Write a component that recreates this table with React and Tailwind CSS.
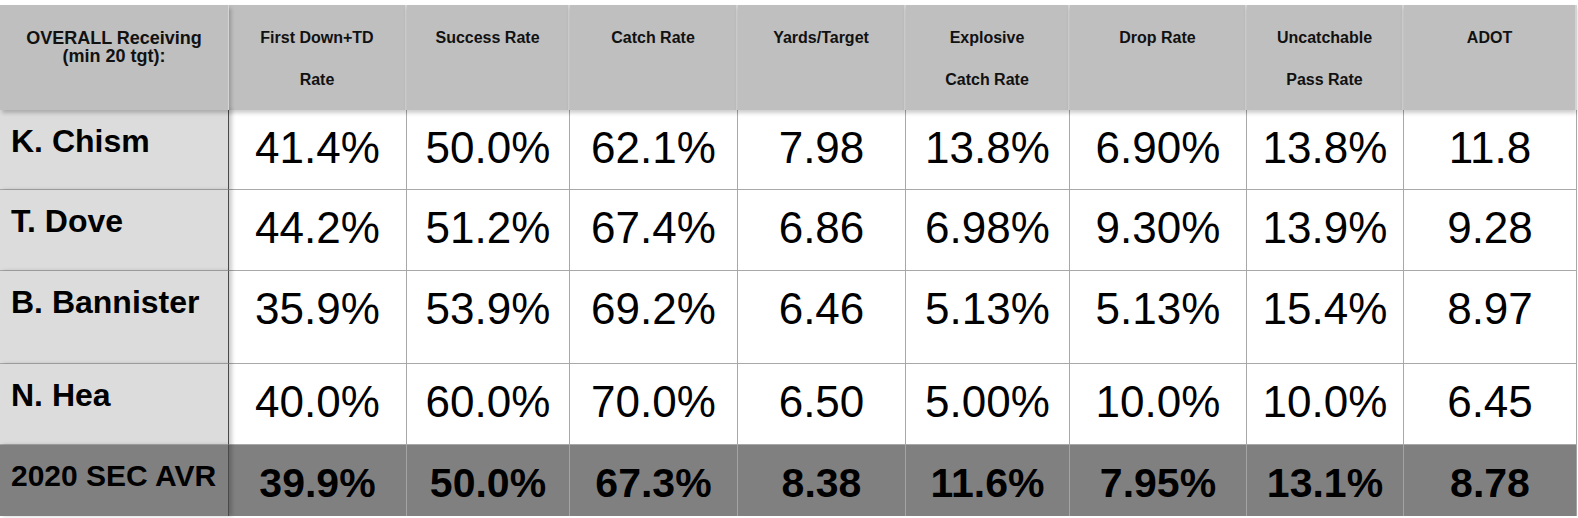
const HEADERS = [
  ["First Down+TD", "Rate"],
  ["Success Rate"],
  ["Catch Rate"],
  ["Yards/Target"],
  ["Explosive", "Catch Rate"],
  ["Drop Rate"],
  ["Uncatchable", "Pass Rate"],
  ["ADOT"],
];

const ROWS = [
  { name: "K. Chism", h: "h-[80px]", vals: ["41.4%", "50.0%", "62.1%", "7.98", "13.8%", "6.90%", "13.8%", "11.8"] },
  { name: "T. Dove", h: "h-[81px]", vals: ["44.2%", "51.2%", "67.4%", "6.86", "6.98%", "9.30%", "13.9%", "9.28"] },
  { name: "B. Bannister", h: "h-[93px]", vals: ["35.9%", "53.9%", "69.2%", "6.46", "5.13%", "5.13%", "15.4%", "8.97"] },
  { name: "N. Hea", h: "h-[81px]", vals: ["40.0%", "60.0%", "70.0%", "6.50", "5.00%", "10.0%", "10.0%", "6.45"] },
];

const AVG = ["39.9%", "50.0%", "67.3%", "8.38", "11.6%", "7.95%", "13.1%", "8.78"];

export default function App() {
  return (
    <div className="w-[1578px] h-[518px] bg-white pt-[5px] font-['Liberation_Sans',Arial,sans-serif] text-black">
      <div className="grid w-[1577px] grid-cols-[229px_178px_163px_168px_168px_164px_177px_157px_173px]">
        {/* header */}
        <div className="relative z-20 h-[105px] bg-[#bfbfbf] border-r border-[#d4d4d4] pt-[24px] text-center text-[18px] leading-[18px] font-bold text-[#111] shadow-[2px_3px_4px_rgba(0,0,0,0.22)]">
          <p>OVERALL Receiving</p>
          <p>(min 20 tgt):</p>
        </div>
        {HEADERS.map((lines, i) => (
          <div
            key={i}
            className="relative z-10 h-[105px] bg-[#bfbfbf] border-r-2 border-[#d4d4d4] pt-[12px] text-center text-[16px] leading-[42px] font-bold text-[#111] shadow-[0_3px_4px_rgba(0,0,0,0.2)]"
          >
            {lines.map((l) => (
              <p key={l}>{l}</p>
            ))}
          </div>
        ))}

        {/* players */}
        {ROWS.map((row) => (
          <div key={row.name} className="contents">
            <div className={`relative z-10 ${row.h} bg-[#dcdcdc] border-r border-r-[#4a4a4a] border-b border-b-[#a8a8a8] pl-[11px] pt-[15px] text-[32px] leading-none font-bold shadow-[3px_0_4px_rgba(0,0,0,0.2)]`}>
              {row.name}
            </div>
            {row.vals.map((v, j) => (
              <div key={j} className={`${row.h} bg-white border-r border-b border-[#a8a8a8] pt-[16px] text-center text-[44px] leading-none`}>
                {v}
              </div>
            ))}
          </div>
        ))}

        {/* average row */}
        <div className="relative z-10 h-[71px] bg-[#808080] border-r border-[#4a4a4a] pl-[11px] pt-[16px] text-[30px] leading-none font-bold shadow-[3px_0_4px_rgba(0,0,0,0.2)]">
          2020 SEC AVR
        </div>
        {AVG.map((v, j) => (
          <div key={j} className="h-[71px] bg-[#808080] border-r border-[#a3a3a3] pt-[18px] text-center text-[41px] leading-none font-bold">
            {v}
          </div>
        ))}
      </div>
    </div>
  );
}
